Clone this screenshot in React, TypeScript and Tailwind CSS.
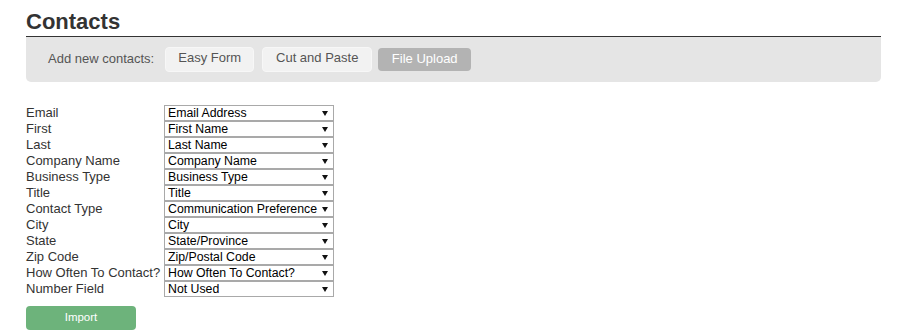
const rows: [string, string][] = [
  ['Email', 'Email Address'],
  ['First', 'First Name'],
  ['Last', 'Last Name'],
  ['Company Name', 'Company Name'],
  ['Business Type', 'Business Type'],
  ['Title', 'Title'],
  ['Contact Type', 'Communication Preference'],
  ['City', 'City'],
  ['State', 'State/Province'],
  ['Zip Code', 'Zip/Postal Code'],
  ['How Often To Contact?', 'How Often To Contact?'],
  ['Number Field', 'Not Used'],
];

function FakeSelect({ value }: { value: string }) {
  return (
    <div className="flex h-[16px] w-[170px] items-center justify-between border border-[#a9a9a9] bg-white pl-[3px] pr-[5px] text-[12.3px] leading-none text-black">
      <span>{value}</span>
      <svg width="6" height="5" viewBox="0 0 6 5" className="shrink-0">
        <path d="M0 0h6L3 5z" fill="#111" />
      </svg>
    </div>
  );
}

export default function App() {
  return (
    <div className="min-h-[336px] bg-white px-[26px] pt-[9px] font-['Liberation_Sans',Arial,sans-serif] text-[#333]">
      <h1 className="text-[22px] font-bold leading-[26px] text-[#333]">Contacts</h1>
      <div className="mt-[1px] w-[855px] border-t border-[#333]">
        <div className="flex h-[45px] items-center rounded-b-[5px] bg-[#e5e5e5] pl-[22px] text-[13px]">
          <span className="mr-[11px] pb-[2px] text-[#555]">Add new contacts:</span>
          <button className="mr-[8px] h-[25px] w-[89px] rounded-[4px] border border-[#f7f7f7] bg-[#f2f2f2] pb-[3px] text-[13px] text-[#555]">
            Easy Form
          </button>
          <button className="mr-[6px] h-[25px] w-[110px] rounded-[4px] border border-[#f7f7f7] bg-[#f2f2f2] pb-[3px] text-[13px] text-[#555]">
            Cut and Paste
          </button>
          <button className="h-[23px] w-[93px] rounded-[4px] bg-[#b3b3b3] pb-[2px] text-[13px] text-white">
            File Upload
          </button>
        </div>
      </div>

      <div className="mt-[23px] flex flex-col">
        {rows.map(([label, value]) => (
          <div key={label} className="flex h-[16px] items-center text-[13px] leading-[16px]">
            <span className="w-[138px] text-[#333]">{label}</span>
            <FakeSelect value={value} />
          </div>
        ))}
      </div>

      <button className="mt-[9px] h-[24px] w-[110px] rounded-[4px] bg-[#6db37b] text-[11.5px] text-white">
        Import
      </button>
    </div>
  );
}
